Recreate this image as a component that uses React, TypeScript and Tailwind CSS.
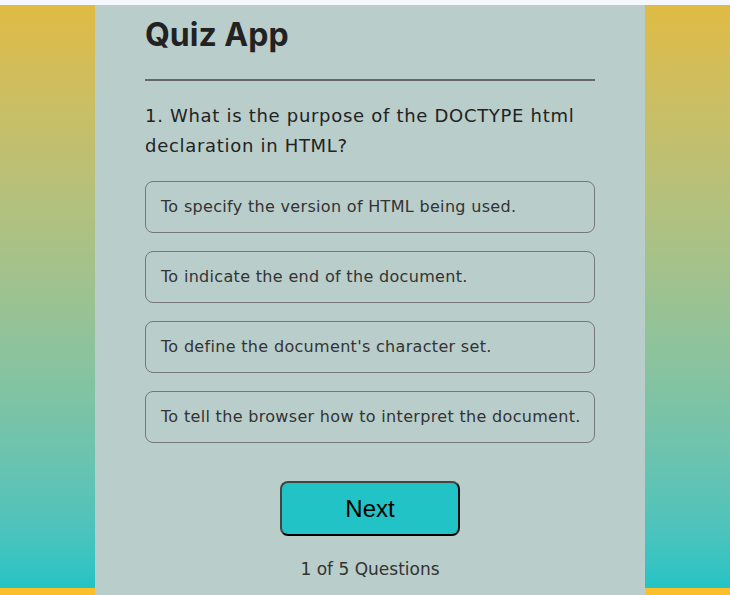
const options = [
  "To specify the version of HTML being used.",
  "To indicate the end of the document.",
  "To define the document's character set.",
  "To tell the browser how to interpret the document.",
]

export default function App() {
  return (
    <div className="min-h-screen bg-[#f4f7fc] pt-[5px] font-['DejaVu_Sans',sans-serif] text-[#222]">
      <div className="flex h-[590px] justify-center bg-[#fbbf2a] bg-gradient-to-b from-[#e0bb43] to-[#22c3c6] bg-no-repeat bg-[length:100%_583px] pl-[10px]">
        <div className="flex h-full w-[550px] flex-col bg-[#b9cdcb] px-[50px]">
          <h1 className="pt-[6px] font-['Inter',sans-serif] text-[32px] font-bold leading-[48px] text-[#222]">Quiz App</h1>
          <hr className="mt-[20px] border-0 border-t-2 border-[#666]" />
          <p className="mt-[20px] text-[18px] font-medium leading-[30px] tracking-[0.7px] text-[#222]">
            1. What is the purpose of the DOCTYPE html declaration in HTML?
          </p>
          <div className="mt-[20px] flex flex-col gap-[18px]">
            {options.map((o) => (
              <button
                key={o}
                className="h-[52px] whitespace-nowrap rounded-lg border border-[#777] pl-[15px] pr-[6px] text-left text-[16px] tracking-[0.32px] text-[#333]"
              >
                {o}
              </button>
            ))}
          </div>
          <button className="mx-auto mt-[38px] h-[55px] w-[180px] rounded-lg border-2 border-[#444] border-b-black border-r-[#111] bg-[#22c3c6] font-['Liberation_Sans',sans-serif] text-[24px] text-black">
            Next
          </button>
          <p className="mt-[21px] text-center text-[17px] text-[#333]">1 of 5 Questions</p>
        </div>
      </div>
    </div>
  )
}
